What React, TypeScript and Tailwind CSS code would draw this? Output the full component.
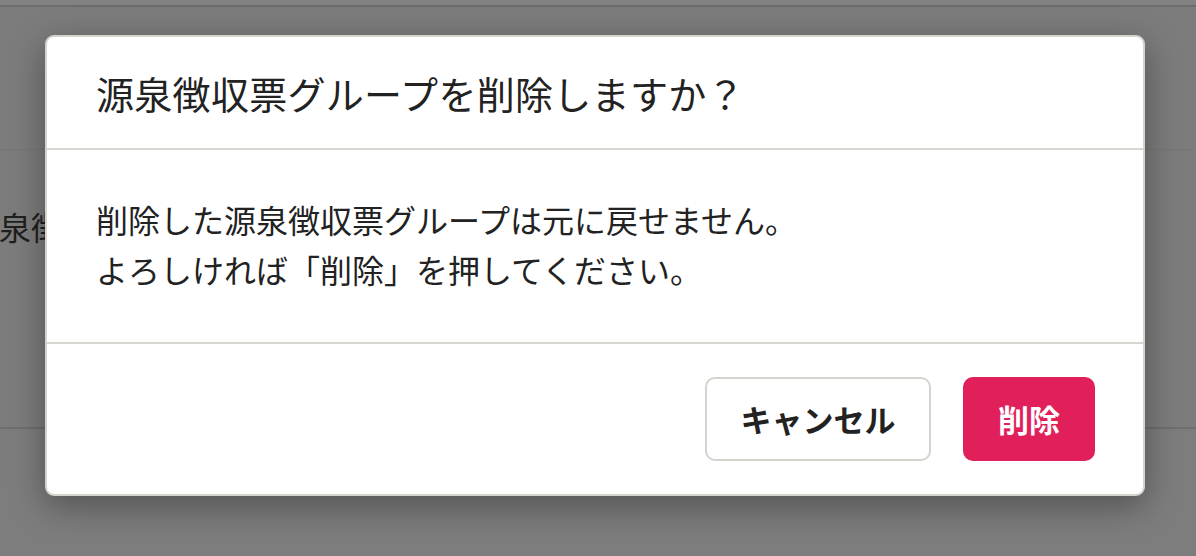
import React from 'react';

const jp = { fontFamily: '"Noto Sans CJK JP", "Noto Sans", sans-serif' };

const Backdrop: React.FC = () => (
  <div className="flex flex-col w-full h-full">
    <div className="h-[7px] bg-[#828282] border-b-2 border-[#6c6c6c]" />
    <div className="h-[143px] border-b border-[#767676]" />
    <div className="h-[279px] border-b-2 border-[#6e6e6e] pt-[58px]">
      <p className="-ml-[33px] text-[32px] text-[#1f1f1f] whitespace-nowrap leading-[36px]">
        源泉徴収票グループ
      </p>
    </div>
    <div className="flex-1 bg-[#7d7d7d]" />
  </div>
);

const ConfirmDialog: React.FC = () => (
  <div className="absolute left-[45px] top-[35px] w-[1100px] bg-white border-2 border-[#d6d2ce] rounded-[9px] shadow-[0_10px_34px_rgba(0,0,0,0.35)] flex flex-col">
    <div className="h-[113px] flex items-center px-[49px] border-b-2 border-[#d9d5d1]">
      <h2 className="text-[38px] text-[#222222] tracking-[0.3px]">源泉徴収票グループを削除しますか？</h2>
    </div>
    <div className="h-[194px] flex flex-col justify-center px-[49px] border-b-2 border-[#d9d5d1]">
      <p className="text-[32px] leading-[50px] text-[#222222] -mt-[4px]">
        削除した源泉徴収票グループは元に戻せません。
        <br />
        よろしければ「削除」を押してください。
      </p>
    </div>
    <div className="h-[150px] flex items-center justify-end gap-[32px] pr-[48px]">
      <button className="h-[84px] w-[226px] rounded-[10px] border-2 border-[#d6d2ce] bg-white text-[31px] font-bold text-[#222222]">
        キャンセル
      </button>
      <button className="h-[84px] w-[132px] rounded-[10px] bg-[#e01f5b] text-[31px] font-bold text-white">
        削除
      </button>
    </div>
  </div>
);

export default function App() {
  return (
    <div className="relative w-[1196px] h-[556px] overflow-hidden bg-[#7c7c7c]" style={jp}>
      <Backdrop />
      <ConfirmDialog />
    </div>
  );
}
